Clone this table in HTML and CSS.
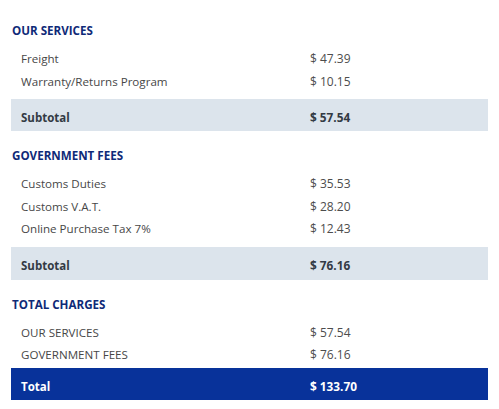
FILE: index.html
```html
<!DOCTYPE html>
<html>
<head>
<meta charset="utf-8">
<link rel="stylesheet" href="styles.css">
</head>
<body>
<div class="summary">
  <section class="sec">
    <h2 class="heading">OUR SERVICES</h2>
    <div class="list">
      <div class="row"><span>Freight</span><span>$ 47.39</span></div>
      <div class="row"><span>Warranty/Returns Program</span><span>$ 10.15</span></div>
    </div>
    <div class="band sub"><span>Subtotal</span><span>$ 57.54</span></div>
  </section>
  <section class="sec">
    <h2 class="heading">GOVERNMENT FEES</h2>
    <div class="list">
      <div class="row"><span>Customs Duties</span><span>$ 35.53</span></div>
      <div class="row"><span>Customs V.A.T.</span><span>$ 28.20</span></div>
      <div class="row"><span>Online Purchase Tax 7%</span><span>$ 12.43</span></div>
    </div>
    <div class="band sub tall"><span>Subtotal</span><span>$ 76.16</span></div>
  </section>
  <section class="sec">
    <h2 class="heading">TOTAL CHARGES</h2>
    <div class="list tight">
      <div class="row"><span>OUR SERVICES</span><span>$ 57.54</span></div>
      <div class="row"><span>GOVERNMENT FEES</span><span>$ 76.16</span></div>
    </div>
    <div class="band total"><span>Total</span><span>$ 133.70</span></div>
  </section>
</div>
</body>
</html>
```
FILE: styles.css
```css
html, body {
  margin: 0;
  padding: 0;
  background: #ffffff;
}
body {
  font-family: "Open Sans", "Liberation Sans", sans-serif;
}
.summary {
  width: 477px;
  padding: 21px 0 0 11px;
}
.sec {
  margin-bottom: 15px;
}
.heading {
  margin: 0;
  height: 20px;
  line-height: 20px;
  padding-left: 1px;
  font-family: "Open Sans", "Liberation Sans", sans-serif;
  font-size: 11.6px;
  font-weight: 700;
  color: #0f2a78;
}
.list {
  padding: 7px 0 6px;
}
.list.tight {
  padding-bottom: 1px;
}
.row, .band {
  display: grid;
  grid-template-columns: 289px 1fr;
  padding-left: 10px;
}
.row {
  height: 22.5px;
  line-height: 22.5px;
  font-size: 12px;
  color: #4d4d4d;
}
.row span:first-child {
  font-size: 11.6px;
  color: #474747;
}
.band {
  box-sizing: border-box;
  height: 32px;
  line-height: 32px;
  padding-top: 4px;
  font-size: 11.8px;
  font-weight: 700;
}
.band span {
  line-height: 29px;
}
.band span:first-child {
  font-size: 11.5px;
}
.band.tall {
  height: 33px;
}
.sub {
  background: #dce4ec;
  color: #333a44;
}
.total {
  background: #08329a;
  color: #ffffff;
}
```
